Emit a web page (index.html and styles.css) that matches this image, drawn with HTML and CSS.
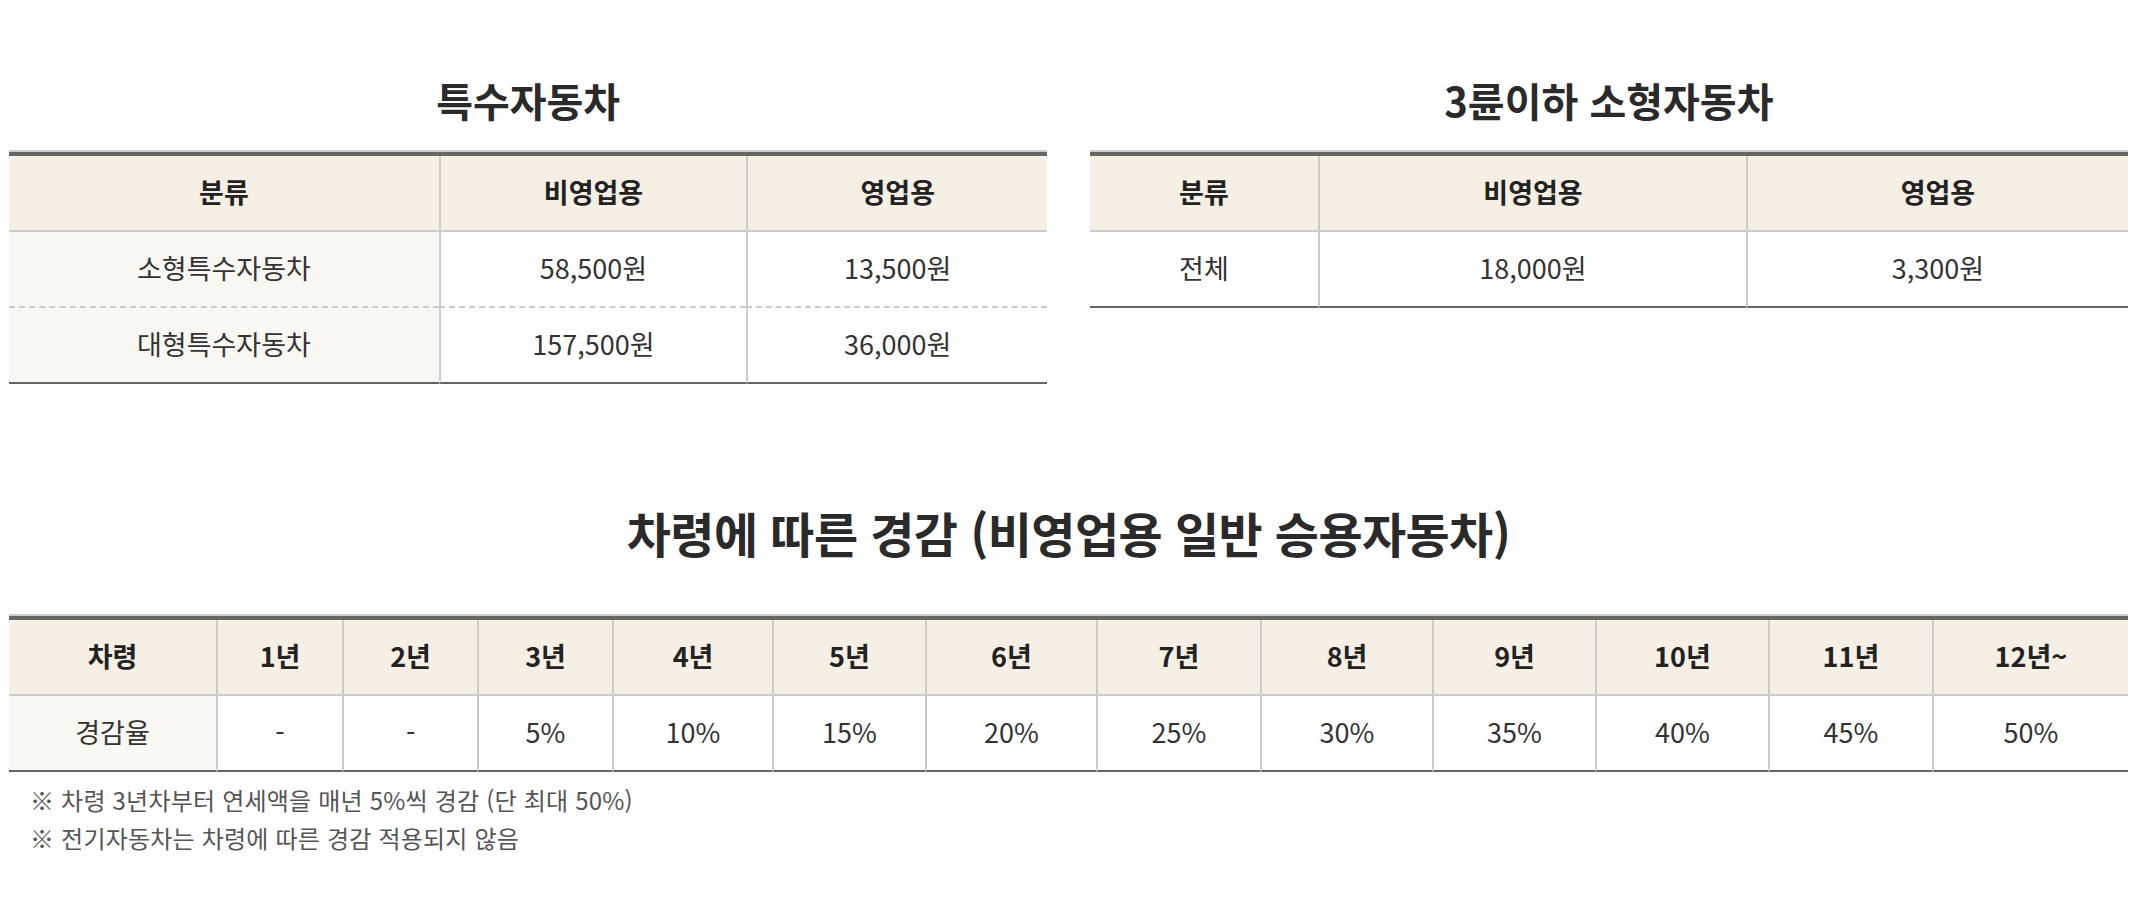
FILE: index.html
```html
<!DOCTYPE html>
<html lang="ko">
<head>
<meta charset="utf-8">
<title>자동차세</title>
<link rel="stylesheet" href="styles.css">
</head>
<body>
<div class="page">
  <div class="top">
    <section class="half">
      <h2 class="title">특수자동차</h2>
      <div class="tbl-wrap">
        <table class="tbl">
          <colgroup><col class="w-a1"><col class="w-a2"><col class="w-a3"></colgroup>
          <thead>
            <tr><th>분류</th><th>비영업용</th><th>영업용</th></tr>
          </thead>
          <tbody>
            <tr class="dash"><td class="lead">소형특수자동차</td><td>58,500원</td><td>13,500원</td></tr>
            <tr><td class="lead">대형특수자동차</td><td>157,500원</td><td>36,000원</td></tr>
          </tbody>
        </table>
      </div>
    </section>
    <section class="half">
      <h2 class="title">3륜이하 소형자동차</h2>
      <div class="tbl-wrap">
        <table class="tbl">
          <colgroup><col class="w-b1"><col class="w-b2"><col class="w-b3"></colgroup>
          <thead>
            <tr><th>분류</th><th>비영업용</th><th>영업용</th></tr>
          </thead>
          <tbody>
            <tr><td>전체</td><td>18,000원</td><td>3,300원</td></tr>
          </tbody>
        </table>
      </div>
    </section>
  </div>

  <section class="full">
    <h2 class="title big">차령에 따른 경감 (비영업용 일반 승용자동차)</h2>
    <div class="tbl-wrap">
      <table class="tbl">
        <colgroup>
          <col class="w-c1"><col class="w-c2"><col class="w-c3"><col class="w-c4"><col class="w-c5"><col class="w-c6"><col class="w-c7"><col class="w-c8"><col class="w-c9"><col class="w-c10"><col class="w-c11"><col class="w-c12"><col class="w-c13">
        </colgroup>
        <thead>
          <tr><th>차령</th><th>1년</th><th>2년</th><th>3년</th><th>4년</th><th>5년</th><th>6년</th><th>7년</th><th>8년</th><th>9년</th><th>10년</th><th>11년</th><th>12년~</th></tr>
        </thead>
        <tbody>
          <tr><td class="lead">경감율</td><td>-</td><td>-</td><td>5%</td><td>10%</td><td>15%</td><td>20%</td><td>25%</td><td>30%</td><td>35%</td><td>40%</td><td>45%</td><td>50%</td></tr>
        </tbody>
      </table>
    </div>
    <ul class="notes">
      <li>※ 차령 3년차부터 연세액을 매년 5%씩 경감 (단 최대 50%)</li>
      <li>※ 전기자동차는 차령에 따른 경감 적용되지 않음</li>
    </ul>
  </section>
</div>
</body>
</html>
```

FILE: styles.css
```css
html, body {
  margin: 0;
  padding: 0;
  background: #ffffff;
}

body {
  font-family: "Noto Sans CJK KR", "Noto Sans", sans-serif;
  color: #333333;
}

.page {
  padding: 0 8px 0 9px;
}

.top {
  display: flex;
  justify-content: space-between;
  padding-top: 76px;
}

.half {
  width: 49%;
}

.title {
  margin: 0 0 26px;
  text-align: center;
  font-size: 40px;
  line-height: 48px;
  font-weight: 700;
  letter-spacing: 0;
  color: #2a2a2a;
}

.title.big {
  font-size: 48px;
  line-height: 56px;
  letter-spacing: -0.6px;
  margin-bottom: 54px;
}

.full {
  margin-top: 120px;
}

.tbl-wrap {
  border-top: 2px solid #cdcdcd;
}

.tbl {
  width: 100%;
  border-collapse: separate;
  border-spacing: 0;
  table-layout: fixed;
  border-top: 4px solid #666666;
}

.tbl th,
.tbl td {
  box-sizing: border-box;
  height: 76px;
  padding: 0 0 4px;
  text-align: center;
  vertical-align: middle;
  font-size: 27px;
  border-bottom: 2px solid #cccccc;
}

.tbl th {
  background: #f5efe4;
  font-weight: 700;
  color: #222222;
}

.tbl td {
  font-weight: 400;
  color: #333333;
}

.tbl th + th,
.tbl td + td {
  border-left: 2px solid #cccccc;
}

.tbl td.lead {
  background: #f9f7f2;
}

.tbl tr.dash td {
  border-bottom: 2px dashed #cccccc;
}

.tbl tbody tr:last-child td {
  border-bottom: 2px solid #666666;
}

/* column widths */
.w-a1 { width: 41.4%; }
.w-a2 { width: 29.6%; }
.w-a3 { width: 29.0%; }

.w-b1 { width: 22.0%; }
.w-b2 { width: 41.2%; }
.w-b3 { width: 36.8%; }

.w-c1 { width: 9.77%; }
.w-c2 { width: 5.95%; }
.w-c3 { width: 6.37%; }
.w-c4 { width: 6.37%; }
.w-c5 { width: 7.55%; }
.w-c6 { width: 7.22%; }
.w-c7 { width: 8.07%; }
.w-c8 { width: 7.74%; }
.w-c9 { width: 8.12%; }
.w-c10 { width: 7.69%; }
.w-c11 { width: 8.16%; }
.w-c12 { width: 7.74%; }
.w-c13 { width: 9.25%; }

.notes {
  list-style: none;
  margin: 9px 0 0;
  padding: 0 0 0 21px;
}

.notes li {
  font-size: 24px;
  line-height: 38px;
  color: #555555;
  letter-spacing: 0.2px;
}
```
